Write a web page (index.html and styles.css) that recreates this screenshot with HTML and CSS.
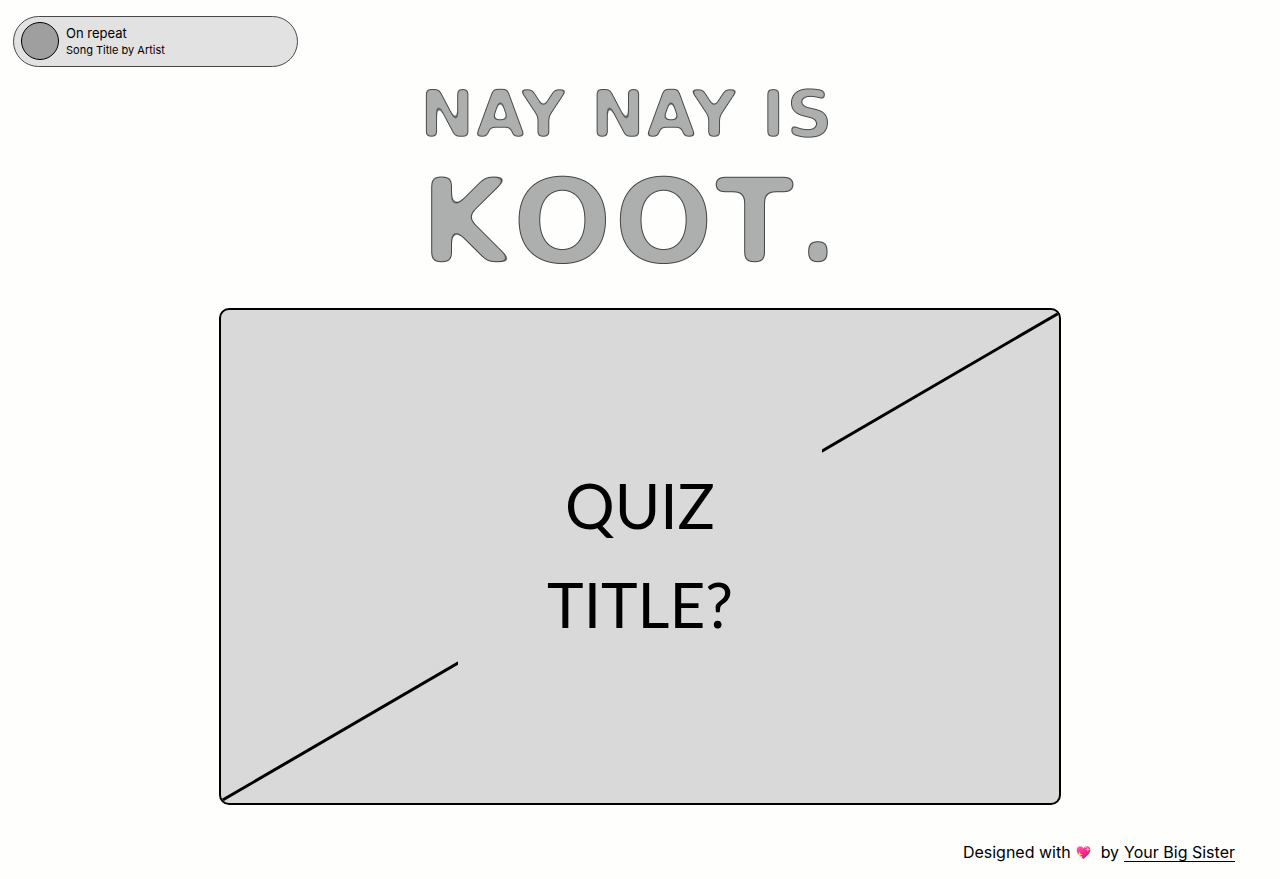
FILE: index.html
```html
<!DOCTYPE html>
<html lang="en">
<head>
<meta charset="utf-8">
<meta name="viewport" content="width=device-width, initial-scale=1">
<title>Nay Nay is Koot</title>
<link rel="stylesheet" href="styles.css">
</head>
<body>
<svg class="filters" aria-hidden="true">
  <!-- Rounds the corners of heavy lettering and adds a thin dark rim -->
  <filter id="soft-small" x="-5%" y="-10%" width="110%" height="120%" color-interpolation-filters="sRGB">
    <feGaussianBlur in="SourceAlpha" stdDeviation="2.5" result="b"/>
    <feComponentTransfer in="b" result="outer"><feFuncA type="linear" slope="7" intercept="-3.3"/></feComponentTransfer>
    <feComponentTransfer in="b" result="inner"><feFuncA type="linear" slope="7" intercept="-4.3"/></feComponentTransfer>
    <feFlood flood-color="#484949"/><feComposite in2="outer" operator="in" result="rim"/>
    <feFlood flood-color="#adafae"/><feComposite in2="inner" operator="in" result="face"/>
    <feMerge><feMergeNode in="rim"/><feMergeNode in="face"/></feMerge>
  </filter>
  <filter id="soft-large" x="-5%" y="-10%" width="110%" height="120%" color-interpolation-filters="sRGB">
    <feGaussianBlur in="SourceAlpha" stdDeviation="5" result="b"/>
    <feComponentTransfer in="b" result="outer"><feFuncA type="linear" slope="13" intercept="-6.8"/></feComponentTransfer>
    <feComponentTransfer in="b" result="inner"><feFuncA type="linear" slope="13" intercept="-7.9"/></feComponentTransfer>
    <feFlood flood-color="#484949"/><feComposite in2="outer" operator="in" result="rim"/>
    <feFlood flood-color="#adafae"/><feComposite in2="inner" operator="in" result="face"/>
    <feMerge><feMergeNode in="rim"/><feMergeNode in="face"/></feMerge>
  </filter>
</svg>

<header class="top">
  <div class="player">
    <span class="cover"></span>
    <div class="track">
      <p class="status">On repeat</p>
      <p class="song">Song Title by Artist</p>
    </div>
  </div>
</header>

<main class="main">
  <h1 class="title">
    <span class="title-small">NAY NAY IS</span>
    <span class="title-large">KOOT.</span>
  </h1>
  <section class="quiz">
    <svg class="quiz-line" viewBox="0 0 838 493" preserveAspectRatio="none" aria-hidden="true">
      <path d="M0 491L838 3" stroke="#000" stroke-width="3"/>
    </svg>
    <h2 class="quiz-title">QUIZ<br>TITLE?</h2>
  </section>
</main>

<footer class="footer">
  <span>Designed with</span>
  <svg class="heart" viewBox="0 0 16 16" role="img" aria-label="love">
    <defs><linearGradient id="pink" x1="0" y1="0" x2="0.6" y2="1"><stop offset="0" stop-color="#ff6fae"/><stop offset="0.5" stop-color="#f72f92"/><stop offset="1" stop-color="#d51b80"/></linearGradient></defs>
    <path fill="url(#pink)" d="M8 15C5.500 12.800 1 9.500 .7 5.600C.5 2.800 2.300 1.200 4.400 1.200C6.100 1.200 7.300 2.200 8 3.600C8.700 2.200 9.900 1.200 11.600 1.200C13.700 1.200 15.500 2.800 15.300 5.600C15 9.500 10.500 12.800 8 15Z"/>
    <path fill="#ffda55" d="M3.800 6.800L4.700 9.200L7.200 10L4.700 10.900L3.800 13.400L2.900 10.900L.5 10L2.900 9.200ZM12.600 2L13.300 4L15.300 4.700L13.300 5.400L12.600 7.400L11.900 5.400L9.900 4.700L11.900 4Z"/>
    <circle cx="10.500" cy="2.400" r=".8" fill="#ffda55"/><circle cx="6" cy="12.500" r=".7" fill="#ffda55"/>
  </svg>
  <span class="by">by</span>
  <a class="credit" href="#">Your Big Sister</a>
</footer>
</body>
</html>
```
FILE: styles.css
```css
* { box-sizing: border-box; }

body {
  margin: 0;
  min-height: 100vh;
  display: flex;
  flex-direction: column;
  background: #fefefd;
  color: #000;
  font-family: Inter, sans-serif;
}

h1, h2, p { margin: 0; font-weight: 400; }

.filters { position: absolute; width: 0; height: 0; }

.top { padding: 16px 13px 0; }

.player {
  display: flex;
  align-items: center;
  gap: 7px;
  max-width: 285px;
  padding: 5px 7px 6px;
  border: 1px solid #484848;
  border-radius: 26px;
  background: #e2e2e2;
}

.cover {
  width: 38px;
  height: 38px;
  border: 1px solid #000;
  border-radius: 50%;
  background: #9f9f9f;
}

.status { font-size: 13px; line-height: 18px; }
.song { font-size: 11px; line-height: 16px; }

.main {
  display: flex;
  flex-direction: column;
  align-items: center;
  gap: 14px;
  padding: 12px 24px 0;
}

.title {
  display: flex;
  flex-direction: column;
  align-items: flex-start;
  padding-right: 20px;
  font-family: "DejaVu Sans", sans-serif;
  font-weight: 700;
  white-space: nowrap;
}

.title-small { font-size: 66px; line-height: 72px; filter: url(#soft-small); }
.title-large { font-size: 119px; font-kerning: none; line-height: 143px; filter: url(#soft-large); }

.quiz {
  position: relative;
  display: flex;
  align-items: center;
  justify-content: center;
  width: 100%;
  max-width: 842px;
  aspect-ratio: 842 / 497;
  border: 2px solid #000;
  border-radius: 10px;
  background: #d9d9d9;
  overflow: hidden;
}

.quiz-line { position: absolute; inset: 0; width: 100%; height: 100%; }

.quiz-title {
  position: relative;
  width: 364px;
  padding: 24px 0 28px;
  background: #d9d9d9;
  font-family: Lato, sans-serif;
  font-size: 62px;
  line-height: 99px;
  text-align: center;
}

.footer {
  display: flex;
  align-items: center;
  justify-content: flex-end;
  margin-top: auto;
  padding: 0 45px 15px;
  font-size: 16px;
  line-height: 24px;
}

.heart { width: 15px; height: 15px; margin: 0 10px 0 5px; }
.by { margin-right: 5px; }
.credit { color: inherit; text-underline-offset: 3px; text-decoration-thickness: 1px; }
```
